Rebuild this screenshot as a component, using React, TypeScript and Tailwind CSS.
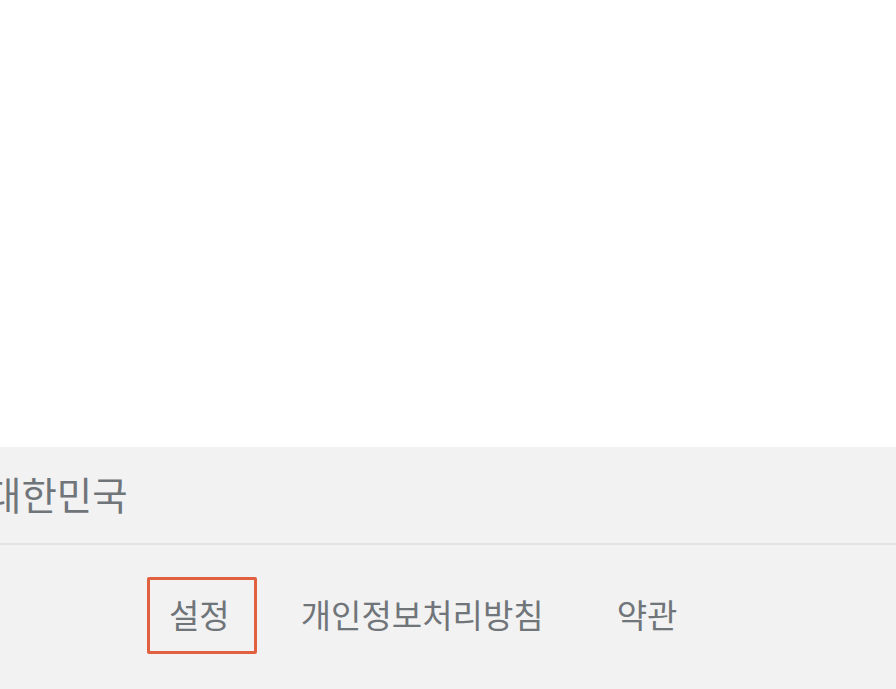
import React from "react";

export default function App() {
  const font = { fontFamily: '"Noto Sans CJK KR", "Noto Sans", sans-serif' };
  return (
    <div className="h-[689px] w-[896px] overflow-hidden bg-white" style={font}>
      <div className="h-[447px] bg-white" />
      <div className="bg-[#f2f2f2]">
        <div className="h-[96px] flex items-center pb-[4px] -ml-[14px] text-[38.5px] text-[#70757a] leading-none whitespace-nowrap">
          대한민국
        </div>
        <div className="h-[2px] bg-[#e3e3e3]" />
        <div className="flex items-start pl-[147px] pt-[32px] h-[144px] text-[33px] text-[#70757a] leading-none whitespace-nowrap">
          <a className="h-[77px] flex items-center pb-[2px] pl-[19px] pr-[24px] border-[3px] border-[#e0603f] rounded-[2px]">설정</a>
          <a className="h-[77px] flex items-center pb-[2px] px-[22px] ml-[19px] border-[3px] border-transparent">개인정보처리방침</a>
          <a className="h-[77px] flex items-center pb-[2px] px-[22px] ml-[23px] border-[3px] border-transparent">약관</a>
        </div>
      </div>
    </div>
  );
}
